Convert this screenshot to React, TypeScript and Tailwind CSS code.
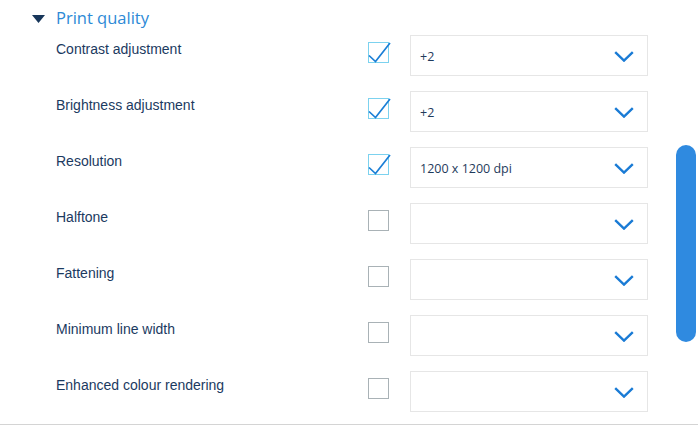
import React from 'react'

type Row = { label: string; checked: boolean; value: string }

const rows: Row[] = [
  { label: 'Contrast adjustment', checked: true, value: '+2' },
  { label: 'Brightness adjustment', checked: true, value: '+2' },
  { label: 'Resolution', checked: true, value: '1200 x 1200 dpi' },
  { label: 'Halftone', checked: false, value: '' },
  { label: 'Fattening', checked: false, value: '' },
  { label: 'Minimum line width', checked: false, value: '' },
  { label: 'Enhanced colour rendering', checked: false, value: '' },
]

const Checkbox: React.FC<{ checked: boolean }> = ({ checked }) => (
  <div
    className={
      'relative mt-[7px] h-[21px] w-[21px] shrink-0 border ' +
      (checked ? 'border-[#7cd2ef]' : 'border-[#a9b2b6]')
    }
  >
    {checked && (
      <svg
        className="absolute left-[-1px] top-[-1px]"
        width="23"
        height="23"
        viewBox="0 0 23 23"
        fill="none"
      >
        <path d="M1 13.5 L7.5 19.5 L22 1" stroke="#1b7fd6" strokeWidth="1.7" />
      </svg>
    )}
  </div>
)

const Select: React.FC<{ value: string }> = ({ value }) => (
  <div className="flex h-[41px] w-[238px] items-center justify-between border border-[#e6e6e6] bg-white pl-[9px] pr-[13px]">
    <span
      className="pt-[4px] text-[12.5px] text-[#1f3b5c]"
      style={{ fontFamily: '"Open Sans", "Noto Sans", sans-serif' }}
    >
      {value}
    </span>
    <svg width="20" height="11" viewBox="0 0 20 11" fill="none" className="mt-[1px]">
      <path d="M1.2 1.2 L10 9.6 L18.8 1.2" stroke="#1a7bd5" strokeWidth="2.4" />
    </svg>
  </div>
)

export default function App() {
  return (
    <div
      className="flex h-[426px] w-[698px] flex-col overflow-hidden bg-white"
      style={{ fontFamily: '"Liberation Sans", Arial, sans-serif' }}
    >
      <div className="flex h-[425px] border-b border-[#d4d4d4]">
        <div className="flex-1">
          <div className="flex h-[35px] items-center pt-[1px]">
            <svg width="13" height="8" viewBox="0 0 13 8" className="ml-[32px] mt-[1px]">
              <path d="M0 0 H13 L6.5 8 Z" fill="#17365a" />
            </svg>
            <span
              className="ml-[11px] text-[16.5px] text-[#2c89d6]"
              style={{ fontFamily: '"Open Sans", "Noto Sans", sans-serif' }}
            >
              Print quality
            </span>
          </div>
          {rows.map((row) => (
            <div key={row.label} className="flex h-[56px] items-start">
              <div className="w-[368px] shrink-0 pl-[56px] pt-[6px] text-[14px] leading-[16px] text-[#1b3a5f]">
                {row.label}
              </div>
              <Checkbox checked={row.checked} />
              <div className="ml-[21px]">
                <Select value={row.value} />
              </div>
            </div>
          ))}
        </div>
        <div className="w-[28px] shrink-0 pl-[6px] pt-[145px]">
          <div className="h-[197px] w-[20px] rounded-full bg-[#2f8ae0]" />
        </div>
      </div>
    </div>
  )
}
